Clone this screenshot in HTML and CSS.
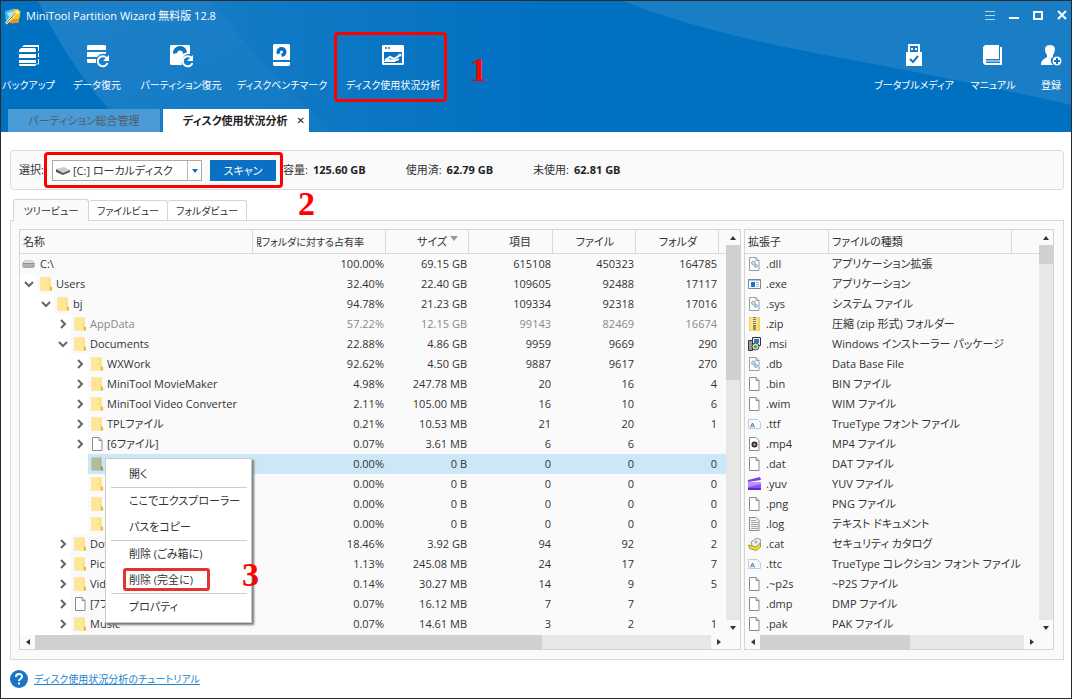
FILE: index.html
```html
<!DOCTYPE html>
<html lang="ja">
<head>
<meta charset="utf-8">
<title>MiniTool Partition Wizard</title>
<link rel="stylesheet" href="styles.css">
</head>
<body>
<svg class="defs" aria-hidden="true">
  <symbol id="folder" viewBox="0 0 13 14"><path d="M.5.5h10v8l1.500 2v3H.5z" fill="#f6d665"/><path d="M1 1h8.500v12H1z" fill="#ffe795"/><path d="M10 10v3.500h2V10z" fill="#e9b93c"/></symbol>
  <symbol id="file" viewBox="0 0 13 14"><path d="M1.500.5h6.500l3 3v10h-9.500z" fill="#fff" stroke="#8c8c8c"/><path d="M8 .5v3h3" fill="none" stroke="#8c8c8c"/></symbol>
  <symbol id="open" viewBox="0 0 10 10"><path d="M1 3l4 4 4-4" fill="none" stroke="#666" stroke-width="2"/></symbol>
  <symbol id="closed" viewBox="0 0 10 10"><path d="M3 1l4 4-4 4" fill="none" stroke="#666" stroke-width="2"/></symbol>
  <symbol id="drive" viewBox="0 0 14 10"><path d="M3 1h8l2.500 3v4l-1 1h-11l-1-1V4z" fill="#8d9090"/><path d="M3 1h8l2 3H1z" fill="#dcdcdc"/><path d="M1 5h12v3H1z" fill="#b4b6b6"/><path d="M10 6h2v1.500h-2z" fill="#3fd060"/></symbol>
  <symbol id="gear" viewBox="0 0 13 14"><path d="M1.500.5h6.500l3 3v10h-9.500z" fill="#fff" stroke="#9c9c9c"/><path d="M8 .5v3h3" fill="none" stroke="#9c9c9c"/><circle cx="5.500" cy="6" r="2" fill="#c9d6df" stroke="#9fb0bc"/><circle cx="8" cy="9" r="1.500" fill="#bcdcf0" stroke="#8ab2ce"/></symbol>
  <symbol id="exe" viewBox="0 0 13 14"><path d="M.5 2.500h12v9H.5z" fill="#fff" stroke="#7b8792"/><path d="M1 3h11v1H1z" fill="#b8c4cf"/><path d="M3 5h4v5H3z" fill="#1476d8"/><path d="M8 5.500h3M8 7.500h3M8 9.500h3" stroke="#9bb7d4"/></symbol>
  <symbol id="zip" viewBox="0 0 13 14"><path d="M1 0h11v14H1z" fill="#f5d35d"/><path d="M2 1h8v12H2z" fill="#ffe48a"/><path d="M6.500 0v9" stroke="#777" stroke-width="3" stroke-dasharray="1 1"/><path d="M5 9h3v4H5z" fill="#a08e55"/></symbol>
  <symbol id="msi" viewBox="0 0 13 14"><path d="M4.500.5h8v8h-8z" fill="#eee" stroke="#333"/><path d="M6 2h5v4H6z" fill="#287cc7"/><path d="M.5 3.500h4v10h-4z" fill="#999" stroke="#333"/><circle cx="7.500" cy="9.500" r="3.500" fill="#d7dfb0" stroke="#444"/><circle cx="7.500" cy="9.500" r="1.500" fill="#22a36a"/></symbol>
  <symbol id="font" viewBox="0 0 13 14"><path d="M.5 2.500h9l3 3v6H.5z" fill="#f7f9fb" stroke="#c6cbd0"/><path d="M2.500 10.500L4.500 6l2 4.500M3.500 9h2" fill="none" stroke="#3a78b8"/></symbol>
  <symbol id="media" viewBox="0 0 13 14"><path d="M1.500.5h6.500l3 3v10h-9.500z" fill="#fff" stroke="#8c8c8c"/><circle cx="6.500" cy="7.500" r="3" fill="#302d3b"/><circle cx="6.500" cy="7.500" r="1.200" fill="#e79a48"/></symbol>
  <symbol id="clip" viewBox="0 0 13 14"><path d="M0 3L12 0l1 3L0 5z" fill="#7a3ff0"/><path d="M0 5h13v8H0z" fill="#8c57f4"/><path d="M0 5h13v2L0 10z" fill="#b896fa"/><path d="M0 11h13v2H0z" fill="#5e27dc"/></symbol>
  <symbol id="log" viewBox="0 0 13 14"><path d="M1.500.5h6.500l3 3v10h-9.500z" fill="#f4f4f4" stroke="#8c8c8c"/><path d="M3 3.500h5M3 5.500h7M3 7.500h7M3 9.500h7M3 11.500h7" stroke="#a5a5a5"/></symbol>
  <symbol id="cat" viewBox="0 0 13 14"><path d="M3 5l6-4 4 2-2 7-6 2z" fill="#eef0ee" stroke="#999"/><path d="M.5 8l7.500 2 4.500-4v4l-4 3.500-7-2z" fill="#ecd93c" stroke="#a39a33"/><circle cx="8" cy="5" r="1.500" fill="#9cc4a8"/></symbol>
</svg>

<header class="hero">
  <svg class="hero-bg" viewBox="0 0 1070 131" preserveAspectRatio="none" aria-hidden="true">
    <defs>
      <linearGradient id="ray" x1="0" y1="0" x2="1" y2="1"><stop offset="0" stop-color="#fff" stop-opacity=".12"/><stop offset="1" stop-color="#fff" stop-opacity=".07"/></linearGradient>
      <linearGradient id="glow" x1="0" y1="0" x2="1" y2="0"><stop offset="0" stop-color="#fff" stop-opacity=".08"/><stop offset="1" stop-color="#fff" stop-opacity="0"/></linearGradient>
    </defs>
    <path d="M37 0H211Q262 70 331 131H131Q75 80 37 0z" fill="url(#ray)"/>
    <path d="M211 0H560V131H331Q262 70 211 0z" fill="url(#glow)"/>
    <path d="M622 0Q700 31 830 55T1070 104V0z" fill="#fff" fill-opacity=".1"/>
  </svg>
  <div class="titlebar">
    <svg class="logo" viewBox="0 0 20 18" aria-hidden="true"><path d="M1 4l9-3 8 3-4 8-12 2z" fill="#45b5e8"/><path d="M8 5c4-6 10-3 9 3l-2 8H6z" fill="#f5c52d"/><path d="M6 13l10-1-1 4-7 1z" fill="#df961a"/><path d="M2 17L13 5" stroke="#fff6c2" stroke-width="3"/><path d="M2 17L13 5" stroke="#6c592b"/><path d="M3 6l5-2 2 3-4 4z" fill="#a9e5f8"/><path d="M14 2l1 2 2 1-2 1-1 2-1-2-2-1 2-1z" fill="#fff375"/></svg>
    <h1>MiniTool Partition Wizard 無料版 12.8</h1>
    <div class="winbtns">
      <button aria-label="メニュー"><svg viewBox="0 0 12 12"><path d="M1 1.500h10M1 5.500h10M1 9.500h10" stroke="#b4d7f0"/></svg></button>
      <button aria-label="最小化"><svg viewBox="0 0 12 12"><path d="M1 8h10" stroke="#fff" stroke-width="2"/></svg></button>
      <button aria-label="最大化"><svg viewBox="0 0 12 12"><path d="M2 2h8v7H2z" fill="none" stroke="#fff" stroke-width="2"/></svg></button>
      <button aria-label="閉じる"><svg viewBox="0 0 12 12"><path d="M2 1l8 8M10 1l-8 8" stroke="#fff" stroke-width="2"/></svg></button>
    </div>
  </div>
  <nav class="toolbar">
    <div class="tools tools-main">
      <button><svg viewBox="0 0 24 24"><path d="M7 1h15v2H5zM4 4h14l1 1v3H2V6zM2 10h17v4H2zM2 16h17v3H2zM2 20h17v1l-1 1H3l-1-1z" fill="#fff"/><path d="M21.500 2v5M21.500 9v4M21.500 15v5h-2" fill="none" stroke="#fff"/></svg><span>バックアップ</span></button>
      <button><svg viewBox="0 0 24 24"><path d="M2 2l1-1h17l1 1v4H2zM2 8h19v2c-4-1-7 0-9 3H2zM2 15h9v4H3l-1-1z" fill="#fff"/><path d="M21.500 14a5 5 0 1 0 1 5" fill="none" stroke="#fff" stroke-width="2"/><path d="M24 11v6h-6z" fill="#fff"/></svg><span>データ復元</span></button>
      <button><svg viewBox="0 0 24 24"><path d="M2 1h18l1 1v8c-6-1-9 5-8 11H2l-1-1V2z" fill="#fff"/><path d="M4 10a7 7 0 0 1 14-2l-4 2a3 3 0 0 0-6-1z" fill="#0b74c5"/><path d="M9 10l3 2-5 5z" fill="#fff"/><circle cx="11" cy="9" r="2" fill="#fff"/><path d="M22.500 14a5 5 0 1 0 1 5" fill="none" stroke="#fff" stroke-width="2"/><path d="M24 11v6h-6z" fill="#fff"/></svg><span>パーティション復元</span></button>
      <button><svg viewBox="0 0 24 24"><path d="M4 0h15l1 1v15H3V1zM3 18h17v3l-1 1H4l-1-1z" fill="#fff"/><circle cx="11.500" cy="8" r="5" fill="#0870c3"/><path d="M11 9l1 5-6 1-1-4z" fill="#fff"/><circle cx="11.500" cy="8" r="1.500" fill="#fff"/></svg><span>ディスクベンチマーク</span></button>
      <button class="marked"><svg viewBox="0 0 24 24"><path d="M2 1h20l1 1v18l-1 1H2l-1-1V2z" fill="#fff"/><path d="M3 8h18v11H3z" fill="#0872c4"/><path d="M4 3h2v2H4zM7 3h2v2H7z" fill="#4998d3"/><path d="M4 16l5-3 4 2 6-4" fill="none" stroke="#fff" stroke-width="2"/><circle cx="19" cy="11" r="1.500" fill="#fff"/><path d="M3 17l4-2 6 1 5-2v2l-5 2H3z" fill="#fff"/></svg><span>ディスク使用状況分析</span><b class="num num-1">1</b></button>
    </div>
    <div class="tools tools-side">
      <button><svg viewBox="0 0 24 24"><path d="M6 0h12v8h2v14H4V8h2z" fill="#fff"/><path d="M8 2h8v6H8z" fill="#1679c7"/><path d="M9 4h2v2H9zM13 4h2v2h-2z" fill="#fff"/><path d="M8 15l3 3 5-6" fill="none" stroke="#1679c7" stroke-width="2"/></svg><span>ブータブルメディア</span></button>
      <button><svg viewBox="0 0 24 24"><path d="M4 1h14v14H5v4h14V3h2v18H4l-2-2V3z" fill="#fff"/><path d="M5 17h14" stroke="#fff"/></svg><span>マニュアル</span></button>
      <button><svg viewBox="0 0 24 24"><path d="M11 1c6 0 6 6 3 10v2c-3 1-3 5 0 8H2c0-5 3-6 6-8v-2C5 7 5 1 11 1z" fill="#fff"/><circle cx="18" cy="17" r="5" fill="#fff" stroke="#1679c7"/><path d="M15 17h6M18 14v6" stroke="#1679c7" stroke-width="2"/></svg><span>登録</span></button>
    </div>
  </nav>
  <div class="maintabs">
    <button class="maintab">パーティション総合管理</button>
    <button class="maintab active">ディスク使用状況分析<span class="x">✕</span></button>
  </div>
</header>

<main>
  <section class="info">
    <label for="disk">選択:</label>
    <div class="picker">
      <div class="combo">
        <svg class="combo-icon" viewBox="0 0 14 14" aria-hidden="true"><path d="M0 5l8-2 6 3-7 3z" fill="#ccc"/><path d="M0 5l7 4 7-3v2l-7 3-7-3z" fill="#555"/></svg>
        <select id="disk"><option>[C:] ローカルディスク</option></select>
        <svg class="combo-arrow" viewBox="0 0 8 4" aria-hidden="true"><path d="M1 0h6L4 4z" fill="#0a70c4"/></svg>
      </div>
      <button class="scan">スキャン</button>
      <b class="num num-2">2</b>
    </div>
    <dl>
      <div><dt>容量:</dt><dd>125.60 GB</dd></div>
      <div><dt>使用済:</dt><dd>62.79 GB</dd></div>
      <div><dt>未使用:</dt><dd>62.81 GB</dd></div>
    </dl>
  </section>

  <div class="viewtabs">
    <button class="active">ツリービュー</button><button>ファイルビュー</button><button>フォルダビュー</button>
  </div>

  <section class="panel">
    <div class="pane tree">
      <div class="view">
        <table>
          <colgroup><col><col class="c-pct"><col class="c-num"><col class="c-num"><col class="c-num"><col class="c-num"><col class="c-end"></colgroup>
          <thead><tr><th>名称</th><th><span class="clip">親フォルダに対する占有率</span></th><th class="sorted">サイズ</th><th>項目</th><th>ファイル</th><th>フォルダ</th><th></th></tr></thead>
          <tbody>
            <tr><td><div class="node"><span class="label root"><svg><use href="#drive"/></svg>C:\</span></div></td><td>100.00%</td><td>69.15 GB</td><td>615108</td><td>450323</td><td>164785</td><td></td></tr>
            <tr><td><div class="node l1"><i><svg><use href="#open"/></svg></i><span class="label"><svg><use href="#folder"/></svg>Users</span></div></td><td>32.40%</td><td>22.40 GB</td><td>109605</td><td>92488</td><td>17117</td><td></td></tr>
            <tr><td><div class="node l2"><i><svg><use href="#open"/></svg></i><span class="label"><svg><use href="#folder"/></svg>bj</span></div></td><td>94.78%</td><td>21.23 GB</td><td>109334</td><td>92318</td><td>17016</td><td></td></tr>
            <tr class="dim"><td><div class="node l3"><i><svg><use href="#closed"/></svg></i><span class="label"><svg><use href="#folder"/></svg>AppData</span></div></td><td>57.22%</td><td>12.15 GB</td><td>99143</td><td>82469</td><td>16674</td><td></td></tr>
            <tr><td><div class="node l3"><i><svg><use href="#open"/></svg></i><span class="label"><svg><use href="#folder"/></svg>Documents</span></div></td><td>22.88%</td><td>4.86 GB</td><td>9959</td><td>9669</td><td>290</td><td></td></tr>
            <tr><td><div class="node l4"><i><svg><use href="#closed"/></svg></i><span class="label"><svg><use href="#folder"/></svg>WXWork</span></div></td><td>92.62%</td><td>4.50 GB</td><td>9887</td><td>9617</td><td>270</td><td></td></tr>
            <tr><td><div class="node l4"><i><svg><use href="#closed"/></svg></i><span class="label"><svg><use href="#folder"/></svg>MiniTool MovieMaker</span></div></td><td>4.98%</td><td>247.78 MB</td><td>20</td><td>16</td><td>4</td><td></td></tr>
            <tr><td><div class="node l4"><i><svg><use href="#closed"/></svg></i><span class="label"><svg><use href="#folder"/></svg>MiniTool Video Converter</span></div></td><td>2.11%</td><td>105.00 MB</td><td>16</td><td>10</td><td>6</td><td></td></tr>
            <tr><td><div class="node l4"><i><svg><use href="#closed"/></svg></i><span class="label"><svg><use href="#folder"/></svg>TPLファイル</span></div></td><td>0.21%</td><td>10.53 MB</td><td>21</td><td>20</td><td>1</td><td></td></tr>
            <tr><td><div class="node l4"><i><svg><use href="#closed"/></svg></i><span class="label"><svg><use href="#file"/></svg>[6ファイル]</span></div></td><td>0.07%</td><td>3.61 MB</td><td>6</td><td>6</td><td></td><td></td></tr>
            <tr class="selected"><td><div class="node l4"><i></i><span class="label"><svg><use href="#folder"/></svg></span></div></td><td>0.00%</td><td>0 B</td><td>0</td><td>0</td><td>0</td><td></td></tr>
            <tr><td><div class="node l4"><i></i><span class="label"><svg><use href="#folder"/></svg></span></div></td><td>0.00%</td><td>0 B</td><td>0</td><td>0</td><td>0</td><td></td></tr>
            <tr><td><div class="node l4"><i></i><span class="label"><svg><use href="#folder"/></svg></span></div></td><td>0.00%</td><td>0 B</td><td>0</td><td>0</td><td>0</td><td></td></tr>
            <tr><td><div class="node l4"><i></i><span class="label"><svg><use href="#folder"/></svg></span></div></td><td>0.00%</td><td>0 B</td><td>0</td><td>0</td><td>0</td><td></td></tr>
            <tr><td><div class="node l3"><i><svg><use href="#closed"/></svg></i><span class="label"><svg><use href="#folder"/></svg>Downloads</span></div></td><td>18.46%</td><td>3.92 GB</td><td>94</td><td>92</td><td>2</td><td></td></tr>
            <tr><td><div class="node l3"><i><svg><use href="#closed"/></svg></i><span class="label"><svg><use href="#folder"/></svg>Pictures</span></div></td><td>1.13%</td><td>245.08 MB</td><td>24</td><td>17</td><td>7</td><td></td></tr>
            <tr><td><div class="node l3"><i><svg><use href="#closed"/></svg></i><span class="label"><svg><use href="#folder"/></svg>Videos</span></div></td><td>0.14%</td><td>30.27 MB</td><td>14</td><td>9</td><td>5</td><td></td></tr>
            <tr><td><div class="node l3"><i><svg><use href="#closed"/></svg></i><span class="label"><svg><use href="#file"/></svg>[7ファイル]</span></div></td><td>0.07%</td><td>16.12 MB</td><td>7</td><td>7</td><td></td><td></td></tr>
            <tr><td><div class="node l3"><i><svg><use href="#closed"/></svg></i><span class="label"><svg><use href="#folder"/></svg>Music</span></div></td><td>0.07%</td><td>14.61 MB</td><td>3</td><td>2</td><td>1</td><td></td></tr>
            <tr><td><div class="node l3"><i></i><span class="label"><svg><use href="#folder"/></svg></span></div></td><td></td><td></td><td></td><td></td><td></td><td></td></tr>
          </tbody>
        </table>
      </div>
      <div class="vbar"><span class="arrow up"></span><div class="track"><div class="thumb v-tree"></div></div><span class="arrow down"></span></div>
      <div class="hbar"><span class="arrow left"></span><div class="track"><div class="thumb h-tree"></div></div><span class="arrow right"></span></div>
      <div class="menu" role="menu">
        <button role="menuitem">開く</button>
        <hr>
        <button role="menuitem">ここでエクスプローラー</button>
        <button role="menuitem">パスをコピー</button>
        <hr>
        <button role="menuitem">削除 (ごみ箱に)</button>
        <button role="menuitem"><span class="framed">削除 (完全に)</span></button>
        <hr>
        <button role="menuitem">プロパティ</button>
        <b class="num num-3">3</b>
      </div>
    </div>
    <div class="pane types">
      <div class="view">
        <table>
          <colgroup><col class="c-ext"><col><col class="c-gap"></colgroup>
          <thead><tr><th>拡張子</th><th>ファイルの種類</th><th></th></tr></thead>
          <tbody>
            <tr><td><span class="ext"><svg><use href="#gear"/></svg>.dll</span></td><td>アプリケーション拡張</td><td></td></tr>
            <tr><td><span class="ext"><svg><use href="#exe"/></svg>.exe</span></td><td>アプリケーション</td><td></td></tr>
            <tr><td><span class="ext"><svg><use href="#gear"/></svg>.sys</span></td><td>システム ファイル</td><td></td></tr>
            <tr><td><span class="ext"><svg><use href="#zip"/></svg>.zip</span></td><td>圧縮 (zip 形式) フォルダー</td><td></td></tr>
            <tr><td><span class="ext"><svg><use href="#msi"/></svg>.msi</span></td><td>Windows インストーラー パッケージ</td><td></td></tr>
            <tr><td><span class="ext"><svg><use href="#gear"/></svg>.db</span></td><td>Data Base File</td><td></td></tr>
            <tr><td><span class="ext"><svg><use href="#file"/></svg>.bin</span></td><td>BIN ファイル</td><td></td></tr>
            <tr><td><span class="ext"><svg><use href="#file"/></svg>.wim</span></td><td>WIM ファイル</td><td></td></tr>
            <tr><td><span class="ext"><svg><use href="#font"/></svg>.ttf</span></td><td>TrueType フォント ファイル</td><td></td></tr>
            <tr><td><span class="ext"><svg><use href="#media"/></svg>.mp4</span></td><td>MP4 ファイル</td><td></td></tr>
            <tr><td><span class="ext"><svg><use href="#file"/></svg>.dat</span></td><td>DAT ファイル</td><td></td></tr>
            <tr><td><span class="ext"><svg><use href="#clip"/></svg>.yuv</span></td><td>YUV ファイル</td><td></td></tr>
            <tr><td><span class="ext"><svg><use href="#file"/></svg>.png</span></td><td>PNG ファイル</td><td></td></tr>
            <tr><td><span class="ext"><svg><use href="#log"/></svg>.log</span></td><td>テキスト ドキュメント</td><td></td></tr>
            <tr><td><span class="ext"><svg><use href="#cat"/></svg>.cat</span></td><td>セキュリティ カタログ</td><td></td></tr>
            <tr><td><span class="ext"><svg><use href="#font"/></svg>.ttc</span></td><td>TrueType コレクション フォント ファイル</td><td></td></tr>
            <tr><td><span class="ext"><svg><use href="#file"/></svg>.~p2s</span></td><td>~P2S ファイル</td><td></td></tr>
            <tr><td><span class="ext"><svg><use href="#file"/></svg>.dmp</span></td><td>DMP ファイル</td><td></td></tr>
            <tr><td><span class="ext"><svg><use href="#file"/></svg>.pak</span></td><td>PAK ファイル</td><td></td></tr>
            <tr><td><span class="ext"><svg><use href="#file"/></svg></span></td><td></td><td></td></tr>
          </tbody>
        </table>
      </div>
      <div class="vbar"><span class="arrow up"></span><div class="track"><div class="thumb v-types"></div></div><span class="arrow down"></span></div>
      <div class="hbar"><span class="arrow left"></span><div class="track"><div class="thumb h-types"></div></div><span class="arrow right"></span></div>
    </div>
  </section>
</main>

<footer>
  <svg viewBox="0 0 18 18" aria-hidden="true"><circle cx="9" cy="9" r="9" fill="#1874c4"/><path d="M6 7c0-4 6-4 6-.5C12 9 9 8.500 9 11M9 12.500v2" fill="none" stroke="#fff" stroke-width="2"/></svg>
  <a href="#">ディスク使用状況分析のチュートリアル</a>
</footer>
</body>
</html>
```

FILE: styles.css
```css
* { box-sizing: border-box; }
body {
  margin: 0;
  height: 100vh;
  display: flex;
  flex-direction: column;
  overflow: hidden;
  border: 1px solid #2b2b2b;
  background: #fff;
  color: #333;
  font: 11px/16px "Open Sans", "Noto Sans CJK JP", sans-serif;
  font-feature-settings: "palt";
}
button, select {
  margin: 0;
  padding: 0;
  border: 0;
  background: none;
  color: inherit;
  font: inherit;
  font-feature-settings: inherit;
  white-space: nowrap;
}
.defs { position: absolute; width: 0; height: 0; }
.num {
  position: absolute;
  color: #f00;
  font: bold 34px/34px "Liberation Serif", serif;
  z-index: 3;
}

/* header */
.hero {
  position: relative;
  display: flex;
  flex-direction: column;
  background: #0070c1;
  color: #fff;
}
.hero-bg { position: absolute; inset: 0; width: 100%; height: 100%; }
.titlebar, .toolbar, .maintabs { position: relative; display: flex; }
.titlebar { height: 30px; align-items: center; padding: 0 3px 0 3px; }
.logo { width: 19px; height: 18px; }
h1 { margin: 0 0 0 3px; font-size: 11px; font-weight: 400; }
.winbtns { margin-left: auto; display: flex; gap: 12px; }
.winbtns button { width: 12px; height: 12px; display: block; }
.winbtns svg { display: block; width: 12px; height: 12px; }
.toolbar { height: 78px; justify-content: space-between; align-items: stretch; }
.tools { display: grid; }
.tools-main { grid-template-columns: 55px 82px 86px 116px 106px; }
.tools-side { grid-template-columns: 82px 76px 40px; }
.tools button {
  position: relative;
  display: flex;
  flex-direction: column;
  align-items: center;
  gap: 9px;
  padding-top: 13px;
  font-size: 10px;
}
.tools svg { width: 24px; height: 24px; }
.marked::after {
  content: "";
  position: absolute;
  inset: 1px -1px 7px -6px;
  border: 3px solid #f00;
  border-radius: 4px;
}
.tools .num-1 { left: 130px; top: 22px; }
.maintabs { gap: 3px; padding-left: 7px; }
.maintab {
  width: 152px;
  height: 23px;
  background: #4a9bd5;
  color: #555c66;
}
.maintab.active {
  width: 146px;
  display: flex;
  align-items: center;
  justify-content: flex-end;
  gap: 9px;
  padding-right: 4px;
  background: #fff;
  color: #222;
  font-weight: 700;
}
.x { font-family: "DejaVu Sans", sans-serif; font-size: 10px; font-weight: 400; }

/* disk information */
main { flex: 1; min-height: 0; display: flex; flex-direction: column; padding: 18px 7px 0 9px; }
.info {
  height: 40px;
  flex: none;
  display: flex;
  align-items: center;
  padding-left: 8px;
  border: 1px solid #ddd;
  border-radius: 4px;
  background: #fafafa;
}
.info label { width: 25px; white-space: nowrap; }
.picker {
  position: relative;
  display: flex;
  gap: 8px;
  padding: 5px 4px 4px 5px;
  border: 3px solid #f00;
  border-radius: 4px;
  background: #fafafa;
}
.combo { position: relative; }
.combo select {
  display: block;
  width: 150px;
  height: 21px;
  padding-left: 20px;
  appearance: none;
  border: 1px solid #aaa;
  background: linear-gradient(#bbb, #bbb) right 13px top / 1px 100% no-repeat #fff;
}
.combo-icon { position: absolute; left: 4px; top: 4px; width: 14px; height: 14px; }
.combo-arrow { position: absolute; right: 3px; top: 9px; width: 8px; height: 4px; pointer-events: none; }
.scan { width: 66px; height: 21px; background: #0a70c4; color: #fff; }
.num-2 { left: 251px; top: 32px; }
dl { margin: 0; display: flex; gap: 40px; white-space: nowrap; }
dl div { display: flex; gap: 5px; }
dd { margin: 0; color: #222; font-weight: 700; }

/* view tabs */
.viewtabs { display: flex; align-items: flex-end; flex: none; height: 30px; padding-left: 3px; }
.viewtabs button {
  width: 79px;
  height: 20px;
  border: 1px solid #d4d4d4;
  border-bottom: 0;
  border-left: 0;
  border-radius: 3px 3px 0 0;
  background: #fff;
  font-size: 10px;
}
.viewtabs .active {
  position: relative;
  z-index: 1;
  width: 76px;
  height: 22px;
  margin-bottom: -1px;
  border-left: 1px solid #d4d4d4;
  background: #fafafa;
}

/* lists */
.panel {
  flex: 1;
  min-height: 0;
  display: flex;
  gap: 3px;
  padding: 8px 9px 9px 8px;
  border: 1px solid #d9d9d9;
  background: #fafafa;
}
.pane {
  position: relative;
  display: grid;
  grid-template: minmax(0, 1fr) 14px / minmax(0, 1fr) 14px;
  min-width: 0;
  border: 1px solid #d4d4d4;
}
.tree { flex: 1; }
.types { flex: 0 0 310px; }
.view { overflow: hidden; }
table { width: 100%; table-layout: fixed; border-collapse: separate; border-spacing: 0; white-space: nowrap; }
.c-pct { width: 133px; }
.c-num { width: 83px; }
.c-num:nth-child(4) { width: 84px; }
.c-end { width: 7px; }
.c-ext { width: 84px; }
.c-gap { width: 27px; }
th, td { padding: 0 3px; height: 20px; }
th {
  height: 24px;
  border-right: 1px solid #d9d9d9;
  border-bottom: 1px solid #d9d9d9;
  font-weight: 400;
  text-align: left;
}
th:last-child { border-right: 0; }
.tree th:not(:first-child) { padding: 0 21px 0 4px; text-align: right; }
.tree th:last-child { padding: 0; }
.clip { display: flex; justify-content: flex-end; overflow: hidden; font-size: 10px; }
.sorted { position: relative; }
.sorted::after {
  content: "";
  position: absolute;
  right: 10px;
  top: 6px;
  border: 4px solid transparent;
  border-top: 5px solid #999;
  border-bottom: 0;
}
.tree td { padding-right: 2px; text-align: right; }
.tree td:first-child { padding: 0; }
.node { display: flex; height: 20px; }
.node i { display: flex; justify-content: flex-end; align-items: center; padding-right: 3px; background: #fff; }
.node i svg { width: 10px; height: 10px; }
.l1 i { width: 17px; }
.l2 i { width: 34px; }
.l3 i { width: 51px; }
.l4 i { width: 68px; }
.label { flex: 1; display: flex; align-items: center; gap: 3px; padding-left: 3px; }
.label svg, .ext svg { width: 13px; height: 14px; flex: none; }
.root { gap: 5px; padding-left: 2px; }
.dim { color: #888; }
.selected .label, .selected td:not(:first-child) { background: #cce8f8; }
.selected .label svg { filter: saturate(.5) brightness(.8) hue-rotate(25deg); }
.ext { display: flex; align-items: center; gap: 5px; }

.vbar { display: flex; flex-direction: column; }
.hbar { display: flex; }
.arrow { flex: none; display: grid; place-items: center; width: 14px; height: 15px; }
.hbar .arrow { width: 15px; height: 14px; }
.arrow::before { content: ""; border: 3px solid transparent; }
.up::before { border-bottom: 4px solid #333; border-top: 0; }
.down::before { border-top: 4px solid #333; border-bottom: 0; }
.left::before { border-right: 4px solid #333; border-left: 0; }
.right::before { border-left: 4px solid #333; border-right: 0; }
.track { flex: 1; background: #e7e7e7; }
.thumb { background: #d0d0d0; }
.v-tree { height: 36%; }
.v-types { height: 5%; }
.h-tree { width: 75%; height: 100%; }
.h-types { width: 57%; height: 100%; }

/* context menu */
.menu {
  position: absolute;
  left: 85px;
  top: 228px;
  width: 147px;
  display: flex;
  flex-direction: column;
  padding: 2px 0;
  border: 1px solid #ccc;
  background: #fff;
  box-shadow: 2px 2px 2px #777;
}
.menu button { height: 26px; padding-left: 23px; text-align: left; }
.menu hr { width: 136px; height: 1px; margin: 0 auto; border: 0; background: #ccc; }
.framed {
  margin-left: -6px;
  padding: 1px 14px 1px 3px;
  border: 3px solid #e2342d;
  border-radius: 3px;
}
.num-3 { left: 136px; top: 99px; }

footer { flex: none; height: 38px; display: flex; align-items: center; gap: 6px; padding-left: 9px; font-size: 10px; }
footer svg { width: 18px; height: 18px; }
footer a { color: #2386cf; }
```
